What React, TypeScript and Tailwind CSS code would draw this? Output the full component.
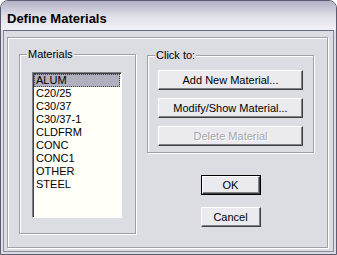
const materials = ["ALUM", "C20/25", "C30/37", "C30/37-1", "CLDFRM", "CONC", "CONC1", "OTHER", "STEEL"];

function Button({ label, disabled = false, isDefault = false }: { label: string; disabled?: boolean; isDefault?: boolean }) {
  const face = (
    <div
      className={`flex-1 flex items-center justify-center bg-[#ebebef] border border-t-white border-l-white border-r-[#404040] border-b-[#404040] shadow-[inset_-1px_-1px_0_#808088] ${
        disabled ? "text-[#a4a4ac] [text-shadow:1px_1px_0_#ffffff]" : "text-black"
      }`}
    >
      {label}
    </div>
  );
  if (isDefault) {
    return <div className="flex h-[20px] border border-black">{face}</div>;
  }
  return <div className="flex h-[20px]">{face}</div>;
}

export default function App() {
  return (
    <div className="w-[337px] h-[255px] bg-white font-['Liberation_Sans',Arial,sans-serif] text-[11px] leading-[13px] text-black">
      <div className="h-full flex flex-col bg-[#dcdce3] border border-[#5c5c70] rounded-t-[8px] overflow-hidden">
        <div className="h-[29px] shrink-0 flex items-center pl-[6px] pt-[5px] bg-gradient-to-b from-[#b0b0c6] via-[#dedee8] to-[#f2f2f6] font-bold text-[13px]">
          Define Materials
        </div>
        <div className="flex-1 flex mx-[2px] mb-[2px] border-t border-t-[#6a6a80] border-x border-b border-[#8a8aa0]">
          <div className="flex-1 flex ml-[3px] mr-[5px] mt-[6px] mb-[3px] border border-[#a0a0a8] shadow-[inset_1px_1px_0_#ffffff,1px_1px_0_#ffffff] pl-[11px] pt-[10px] gap-[11px]">
            <fieldset className="w-[117px] h-[186px] border border-[#a0a0a8] shadow-[inset_1px_1px_0_#ffffff,1px_1px_0_#ffffff] pl-[12px] pt-[11px]">
              <legend className="-ml-[5px] px-[1px] bg-[#dcdce3]">Materials</legend>
              <div className="w-[90px] h-[146px] bg-[#fffff8] border border-t-[#808088] border-l-[#808088] border-r-white border-b-white shadow-[inset_1px_1px_0_#404040] pl-[1px] pt-[1px]">
                {materials.map((m, i) => (
                  <div
                    key={m}
                    className={`h-[13px] pl-[2px] ${
                      i === 0 ? "bg-[#b0b0be] outline-1 outline-dotted outline-offset-[-1px] outline-[#404040] mr-[1px]" : ""
                    }`}
                  >
                    {m}
                  </div>
                ))}
              </div>
            </fieldset>
            <div className="flex flex-col">
              <fieldset className="mt-[1px] w-[167px] h-[104px] border border-[#a0a0a8] shadow-[inset_1px_1px_0_#ffffff,1px_1px_0_#ffffff] pl-[10px] pt-[8px]">
                <legend className="-ml-[3px] px-[1px] bg-[#dcdce3]">Click to:</legend>
                <div className="w-[145px] flex flex-col gap-[8px]">
                  <Button label="Add New Material..." />
                  <Button label="Modify/Show Material..." />
                  <Button label="Delete Material" disabled />
                </div>
              </fieldset>
              <div className="mt-[22px] self-center w-[60px] flex flex-col gap-[12px]">
                <Button label="OK" isDefault />
                <Button label="Cancel" />
              </div>
            </div>
          </div>
        </div>
      </div>
    </div>
  );
}
